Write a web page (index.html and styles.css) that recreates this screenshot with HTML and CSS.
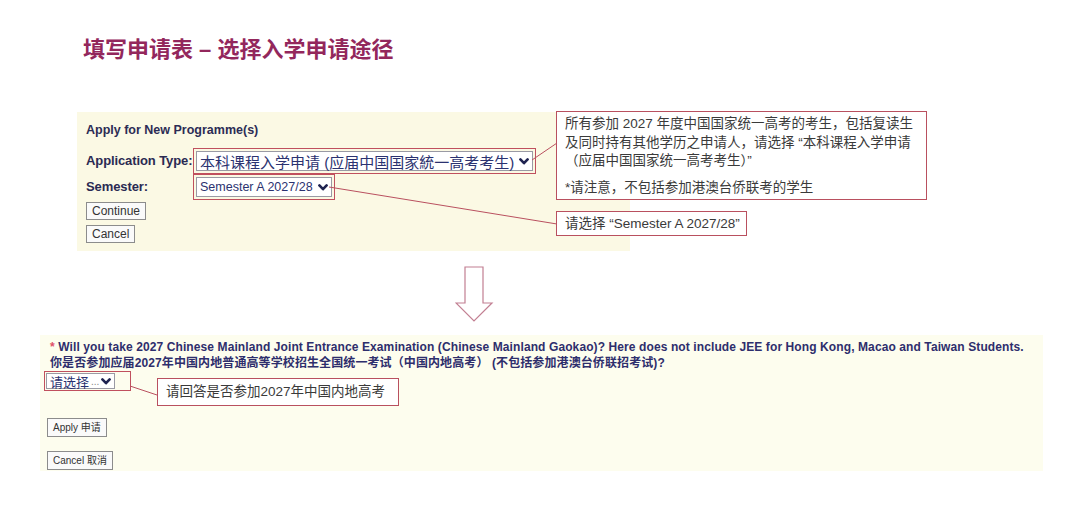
FILE: index.html
```html
<!DOCTYPE html>
<html lang="zh-CN">
<head>
<meta charset="utf-8">
<title>填写申请表 – 选择入学申请途径</title>
<link rel="stylesheet" href="styles.css">
</head>
<body>
<main class="page">
  <h1 class="title">填写申请表 – 选择入学申请途径</h1>

  <section class="shot shot-top">
    <div class="panel panel-top">
      <div class="panel-heading">Apply for New Programme(s)</div>
      <div class="form-grid">
        <span class="field-label">Application Type:</span>
        <span class="mark">
          <span class="select select-type">本科课程入学申请 (应届中国国家統一高考考生)<svg class="chev" viewBox="0 0 10 7"><path d="M1.4 1.4 L5 5.2 L8.6 1.4"/></svg></span>
        </span>
        <span class="field-label">Semester:</span>
        <span class="mark">
          <span class="select select-sem">Semester A 2027/28<svg class="chev" viewBox="0 0 10 7"><path d="M1.4 1.4 L5 5.2 L8.6 1.4"/></svg></span>
        </span>
      </div>
      <div class="btn-stack">
        <button class="btn" type="button">Continue</button>
        <button class="btn" type="button">Cancel</button>
      </div>
    </div>
    <svg class="connectors" width="1080" height="139">
      <line x1="532" y1="48" x2="557" y2="31"/>
      <line x1="329" y1="75" x2="557" y2="112"/>
    </svg>
    <div class="callout callout-type">
      <p class="callout-line">所有参加 2027 年度中国国家统一高考的考生，包括复读生</p>
      <p class="callout-line">及同时持有其他学历之申请人，请选择 “本科课程入学申请</p>
      <p class="callout-line">（应届中国国家统一高考考生）”</p>
      <p class="callout-line callout-note">*请注意，不包括参加港澳台侨联考的学生</p>
    </div>
    <div class="callout callout-sem">请选择 “Semester A 2027/28”</div>
  </section>

  <div class="arrow-row">
    <svg class="down-arrow" viewBox="0 0 39 57"><path d="M10 1 H28 V37 H37 L19 55 L1 37 H10 Z"/></svg>
  </div>

  <section class="shot shot-bottom">
    <div class="panel panel-bottom">
      <p class="question question-en"><span class="req">*</span> Will you take 2027 Chinese Mainland Joint Entrance Examination (Chinese Mainland Gaokao)? Here does not include JEE for Hong Kong, Macao and Taiwan Students.</p>
      <p class="question question-zh">你是否参加应届2027年中国内地普通高等学校招生全国统一考试（中国内地高考） (不包括参加港澳台侨联招考试)?</p>
      <span class="mark mark-q">
        <span class="select select-q">请选择 <span class="dots">...</span><svg class="chev" viewBox="0 0 10 7"><path d="M1.4 1.4 L5 5.2 L8.6 1.4"/></svg></span>
      </span>
      <div class="btn-stack btn-stack-q">
        <button class="btn btn-small" type="button">Apply 申请</button>
        <button class="btn btn-small" type="button">Cancel 取消</button>
      </div>
    </div>
    <svg class="connectors" width="1080" height="136">
      <line x1="130" y1="51" x2="157" y2="60"/>
    </svg>
    <div class="callout callout-q">请回答是否参加2027年中国内地高考</div>
  </section>
</main>
</body>
</html>
```

FILE: styles.css
```css
html, body {
  margin: 0;
  padding: 0;
  background: #ffffff;
}

body {
  font-family: "Liberation Sans", "Noto Sans CJK SC", sans-serif;
  color: #333333;
}

.page {
  width: 1080px;
  height: 523px;
  overflow: hidden;
}

.title {
  margin: 36px 0 0 83px;
  font-family: "Liberation Sans", "Noto Sans CJK SC", sans-serif;
  font-size: 22px;
  line-height: 28px;
  font-weight: 700;
  color: #93275c;
}

.shot {
  position: relative;
}

.shot-top {
  margin-top: 48px;
}

.panel {
  box-sizing: border-box;
}

.panel-top {
  margin-left: 77px;
  width: 553px;
  background: #fbf9e4;
  padding: 10px 0 8px 9px;
}

.panel-heading {
  font-size: 12.5px;
  line-height: 16px;
  font-weight: 700;
  color: #2c2c55;
}

.form-grid {
  display: grid;
  grid-template-columns: 107px auto;
  margin-top: 10px;
  align-items: center;
  justify-items: start;
}

.field-label {
  font-size: 13px;
  line-height: 16px;
  font-weight: 700;
  color: #2a2a52;
  letter-spacing: -0.1px;
}

.mark {
  display: inline-flex;
  border: 1px solid #c0505e;
  padding: 2px;
}

.select {
  display: inline-flex;
  align-items: center;
  gap: 5px;
  box-sizing: border-box;
  height: 20px;
  padding: 0 3px;
  border: 1px solid #9a9aa4;
  background: #ffffff;
  color: #2b3270;
  white-space: nowrap;
}

.select-type {
  font-size: 15px;
}

.select-sem {
  font-size: 12.5px;
}

.chev {
  width: 10px;
  height: 7px;
  flex: none;
}

.chev path {
  fill: none;
  stroke: #1f2350;
  stroke-width: 2.6;
  stroke-linecap: round;
  stroke-linejoin: round;
}

.btn-stack {
  display: flex;
  flex-direction: column;
  align-items: flex-start;
  gap: 5px;
  margin-top: 2px;
}

.btn {
  box-sizing: border-box;
  height: 18px;
  margin: 0;
  padding: 0 5px;
  border: 1px solid #8c8c8c;
  border-radius: 0;
  background: #fafafa;
  font-family: "Liberation Sans", "Noto Sans CJK SC", sans-serif;
  font-size: 12px;
  line-height: 16px;
  color: #333333;
}

.connectors {
  position: absolute;
  left: 0;
  top: 0;
  overflow: visible;
  pointer-events: none;
}

.connectors line {
  stroke: #b9505f;
  stroke-width: 1;
}

.callout {
  position: absolute;
  box-sizing: border-box;
  background: #ffffff;
  border: 1px solid #b9505f;
  color: #3a3a3a;
  font-family: "Liberation Sans", "Noto Sans CJK SC", sans-serif;
  font-size: 13.5px;
  white-space: nowrap;
}

.callout-type {
  left: 556px;
  top: -1px;
  width: 371px;
  height: 89px;
  padding: 3px 0 0 8px;
  line-height: 18.5px;
}

.callout-line {
  margin: 0;
}

.callout-note {
  margin-top: 8px;
}

.callout-sem {
  left: 556px;
  top: 99px;
  width: 191px;
  height: 25px;
  padding-left: 8px;
  line-height: 23px;
}

.arrow-row {
  margin: 15px 0 0 455px;
  height: 57px;
}

.down-arrow {
  display: block;
  width: 39px;
  height: 57px;
}

.down-arrow path {
  fill: #ffffff;
  stroke: #c27f92;
  stroke-width: 1.2;
}

.shot-bottom {
  margin-top: 12px;
}

.panel-bottom {
  margin-left: 40px;
  width: 1003px;
  background: #fdfdee;
  padding: 4px 0 1px 4px;
}

.question {
  margin: 0;
  padding-left: 6px;
  font-size: 12px;
  line-height: 16px;
  font-weight: 700;
  color: #2e2e6c;
  white-space: nowrap;
}

.question-en {
  letter-spacing: 0.1px;
}

.question-zh {
  font-size: 12px;
  letter-spacing: 0.1px;
}

.req {
  color: #e0506a;
}

.mark-q {
  padding: 1px 15px 1px 1px;
}

.select-q {
  height: 16px;
  font-size: 13px;
  gap: 2px;
  padding: 0 3px;
}

.dots {
  color: #888888;
  font-size: 10px;
}

.btn-stack-q {
  margin: 27px 0 0 3px;
  gap: 14px;
}

.btn-small {
  height: 19px;
  font-size: 10px;
  line-height: 17px;
}

.callout-q {
  left: 157px;
  top: 43px;
  width: 242px;
  height: 28px;
  padding-left: 8px;
  line-height: 26px;
}
```
